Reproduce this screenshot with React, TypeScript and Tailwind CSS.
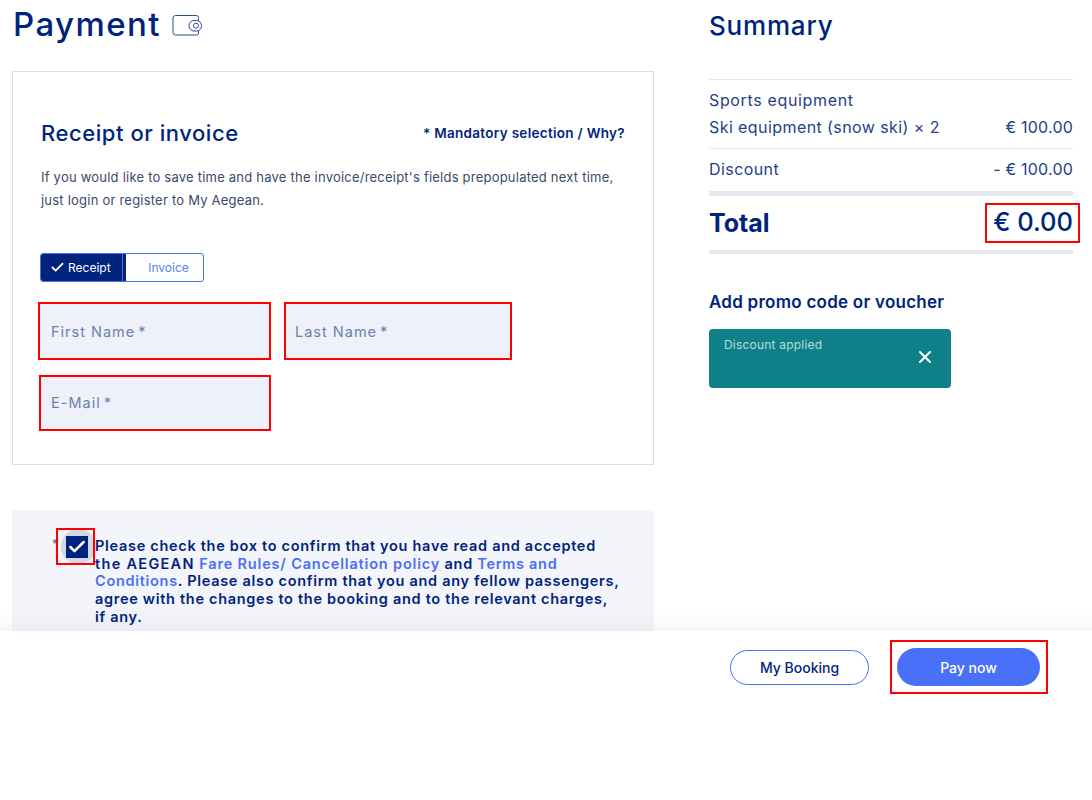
import { Check, X } from "lucide-react";

function Field({ label, className }: { label: string; className: string }) {
  return (
    <div className={`${className} border-2 border-[#ff0000] bg-[#eef1f9] flex items-center text-[14.5px] tracking-[1px] text-[#6b80b0]`}>
      {label}
      <span className="ml-[3px]">*</span>
    </div>
  );
}

function SummaryRow({ left, right }: { left: string; right: string }) {
  return (
    <div className="flex justify-between items-center">
      <span className="tracking-[0.42px]">{left}</span>
      <span className="tracking-[0.2px]">{right}</span>
    </div>
  );
}

export default function App() {
  return (
    <div className="h-[800px] w-[1092px] overflow-hidden bg-white font-['Inter','Liberation_Sans',sans-serif] text-[#00247d]">
      <div className="relative h-[631px] overflow-hidden flex pl-[12px] pr-[19px] justify-between">
        {/* left column */}
        <div className="w-[642px]">
          <div className="h-[71px] flex items-start pt-[2px] pl-[1px]">
            <h1 className="text-[33px] leading-[44px] font-medium tracking-[1.4px]">Payment</h1>
            <svg className="ml-[11px] mt-[12px]" width="30" height="22" viewBox="0 0 30 22" fill="none" stroke="#2a4a94" strokeWidth="1">
              <path d="M3.5 1.5h21a2 2 0 0 1 2 2v3M26.5 17v2a2 2 0 0 1-2 2h-21A2.5 2.5 0 0 1 1 18.500V4a2.500 2.500 0 0 1 2.500-2.500" />
              <rect x="17" y="6.500" width="12.500" height="10.500" rx="5" />
              <circle cx="24" cy="11.700" r="2.500" />
            </svg>
          </div>

          <div className="h-[394px] border border-[#d5dfe9] px-[28px] pt-[45px]">
            <div className="flex justify-between items-center">
              <h2 className="text-[22px] leading-[32px] font-medium tracking-[0.55px]">Receipt or invoice</h2>
              <span className="text-[13.5px] font-semibold tracking-[0.3px]">* Mandatory selection / Why?</span>
            </div>
            <p className="mt-[17px] text-[13px] leading-[23px] text-[#3a4a6b] tracking-[0.22px] whitespace-nowrap">
              If you would like to save time and have the invoice/receipt's fields prepopulated next time,
              <br />
              just login or register to My Aegean.
            </p>

            <div className="mt-[41px] ml-[-1px] flex h-[29px] w-[164px] rounded-[3px] border border-[#4a6fe8] text-[12px] overflow-hidden">
              <div className="w-[81px] bg-[#00247d] text-white flex items-center pl-[9px] gap-[3px]">
                <Check size={15} strokeWidth={3} />
                Receipt
              </div>
              <div className="w-[4px] bg-[#00247d] border-l border-[#4a6fe8]" />
              <div className="flex-1 flex items-center justify-center pl-[8px] text-[#5b80f0]">Invoice</div>
            </div>

            <div className="mt-[20px] ml-[-3px] flex gap-[13px]">
              <Field label="First Name" className="w-[233px] h-[58px] pl-[11px] pt-[2px]" />
              <Field label="Last Name" className="w-[228px] h-[58px] pl-[9px] pt-[2px]" />
            </div>
            <div className="mt-[15px] ml-[-2px]">
              <Field label="E-Mail" className="w-[232px] h-[56px] pl-[10px]" />
            </div>
          </div>

          <div className="mt-[45px] h-[121px] bg-[#f3f5fb] pl-[40px] pt-[18px] flex">
            <div className="relative w-[43px] shrink-0">
              <span className="absolute left-0 top-[7px] text-[12px] text-[#667]">*</span>
              <div className="absolute left-[4px] top-0 w-[39px] h-[37px] border-2 border-[#ff0000] bg-[radial-gradient(circle_at_58%_50%,#d3d8e5_17px,transparent_18px)] flex items-center justify-center">
                <div className="ml-[3px] w-[22px] h-[22px] bg-[#00247d] flex items-center justify-center text-white">
                  <Check size={20} strokeWidth={3} />
                </div>
              </div>
            </div>
            <p className="pt-[9px] text-[14.5px] leading-[17.7px] font-semibold tracking-[0.7px] whitespace-nowrap">
              Please check the box to confirm that you have read and accepted
              <br />
              <span className="tracking-[1.3px]">the AEGEAN</span> <span className="text-[#4a6ff5] tracking-[0.83px]">Fare Rules/ Cancellation policy</span> and <span className="text-[#4a6ff5]">Terms and</span>
              <br />
              <span className="text-[#4a6ff5]">Conditions</span>. Please also confirm that you and any fellow passengers,
              <br />
              agree with the changes to the booking and to the relevant charges,
              <br />
              if any.
            </p>
          </div>
        </div>

        {/* right column */}
        <div className="w-[364px]">
          <h2 className="pt-[9px] text-[26px] leading-[34px] font-medium tracking-[0.8px]">Summary</h2>
          <div className="mt-[36px] border-t border-[#e3e7f0] pt-[8px] pb-[9px] text-[16px] text-[#1f3f86]">
            <div className="leading-[24px] tracking-[0.65px]">Sports equipment</div>
            <div className="mt-[3px] leading-[24px]">
              <SummaryRow left="Ski equipment (snow ski) × 2" right="€ 100.00" />
            </div>
          </div>
          <div className="border-t border-[#e3e7f0] pt-[8px] pb-[10px] leading-[24px] text-[16px] text-[#1f3f86]">
            <SummaryRow left="Discount" right="- € 100.00" />
          </div>
          <div className="border-t-[5px] border-b-[4px] border-[#e3e7f0] h-[63px] flex items-center justify-between">
            <span className="pt-[2px] text-[25px] font-bold">Total</span>
            <span className="relative pb-[2px] text-[25.5px] leading-[38px] font-medium">
              € 0.00
              <span className="absolute left-[-8px] right-[-7px] top-0 bottom-0 border-2 border-[#ff0000]" />
            </span>
          </div>
          <h3 className="mt-[36px] text-[17px] leading-[24px] font-semibold tracking-[0.25px]">Add promo code or voucher</h3>
          <div className="mt-[15px] w-[242px] h-[59px] rounded-[4px] bg-[#0f8087] pl-[15px] pr-[16px] pt-[8px] flex justify-between text-[12px] leading-[16px] tracking-[0.2px] text-[#b9dcdc]">
            <span>Discount applied</span>
            <X className="mt-[10px] text-white" size={20} strokeWidth={2.5} />
          </div>
        </div>

        <div className="absolute inset-x-0 bottom-0 h-[25px] bg-gradient-to-b from-transparent to-[rgba(0,0,0,0.03)]" />
      </div>

      <div className="h-[169px] bg-white flex justify-end items-start pr-[44px] pt-[9px] gap-[21px]">
        <button className="mt-[10px] w-[139px] h-[35px] rounded-full border border-[#4a6ff5] text-[14px] font-medium">My Booking</button>
        <div className="border-2 border-[#ff0000] w-[158px] h-[54px] flex items-center justify-center pr-[1px]">
          <button className="w-[143px] h-[38px] rounded-full bg-[#4870f8] text-white text-[14px] font-medium">Pay now</button>
        </div>
      </div>
    </div>
  );
}
